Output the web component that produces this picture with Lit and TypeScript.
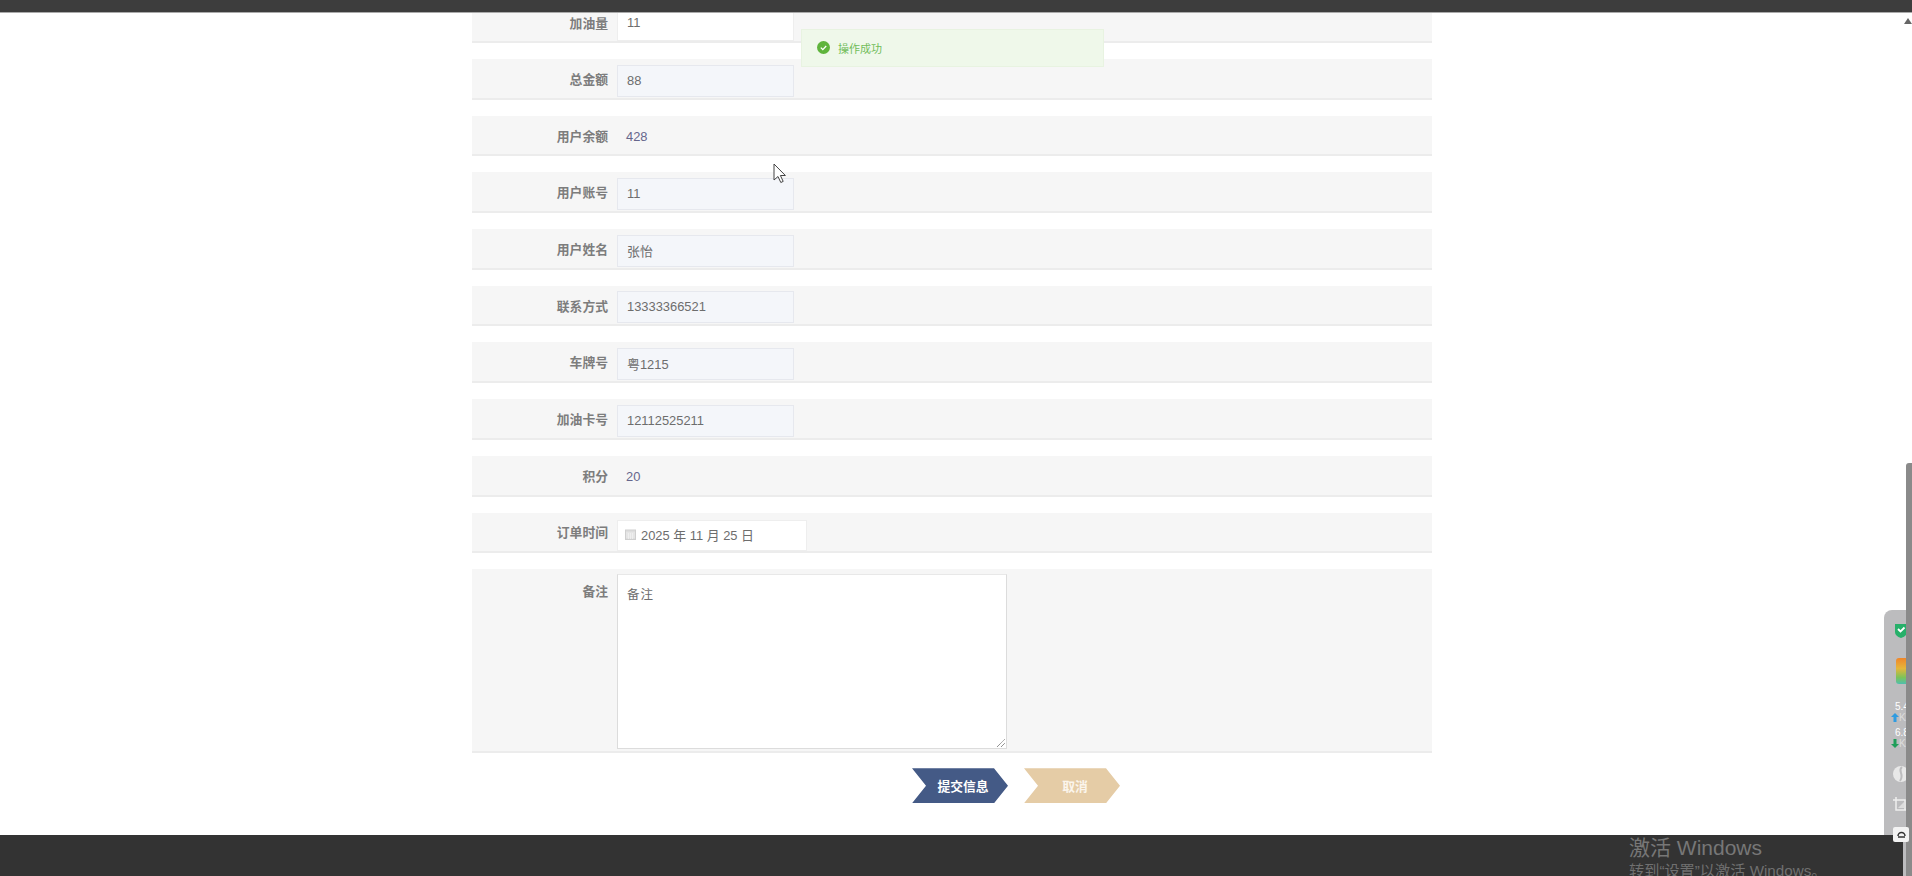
import { LitElement, html, css } from "lit";
import { customElement } from "lit/decorators.js";

type Row = { label: string; value: string; kind: "ro" | "text" };
const rows: Row[] = [
  { label: "总金额", value: "88", kind: "ro" },
  { label: "用户余额", value: "428", kind: "text" },
  { label: "用户账号", value: "11", kind: "ro" },
  { label: "用户姓名", value: "张怡", kind: "ro" },
  { label: "联系方式", value: "13333366521", kind: "ro" },
  { label: "车牌号", value: "粤1215", kind: "ro" },
  { label: "加油卡号", value: "12112525211", kind: "ro" },
  { label: "积分", value: "20", kind: "text" },
];

@customElement("app-root")
export class AppRoot extends LitElement {
  static styles = css`
    :host {
      display: flex;
      flex-direction: column;
      position: relative;
      width: 1912px;
      height: 876px;
      overflow: hidden;
      background: #fff;
      font-family: "Liberation Sans", "Noto Sans CJK SC", sans-serif;
      font-size: 13px;
      color: #666;
    }
    .top { height: 13px; flex: none; background: #3d3d3d; border-bottom: 1px solid #aaa; box-sizing: border-box; }
    main {
      flex: 1;
      min-height: 0;
      width: 960px;
      margin-left: 472px;
      display: flex;
      flex-direction: column;
      gap: 16px;
    }
    .row {
      display: flex;
      align-items: center;
      flex: none;
      height: 40.7px;
      box-sizing: border-box;
      background: #f6f6f6;
      border-bottom: 2px solid #ececec;
    }
    .row.first { height: 30px; align-items: flex-end; overflow: hidden; }
    .row.tall { height: 184px; align-items: flex-start; padding-top: 5px; }
    .label {
      width: 136px;
      flex: none;
      text-align: right;
      font-weight: 700;
      color: #7d7d7d;
      font-size: 12.8px;
      line-height: 15px;
      padding-top: 2px;
    }
    .first .label { align-self: flex-start; margin-top: 1px; }
    .tall .label { padding-top: 10px; }
    .field {
      margin-left: 9px;
      width: 177px;
      height: 32px;
      box-sizing: border-box;
      flex: none;
      align-self: flex-end;
      margin-bottom: 1px;
      display: flex;
      align-items: center;
      padding: 0 9px 1px;
      border: 1px solid #e6e8ee;
      font-size: 12.9px;
      color: #6d6d6d;
      background: #f4f6fa;
    }
    .field.white { background: #fff; border-color: #eee; border-top: 0; height: 28px; margin-bottom: 0; padding-bottom: 8px; }
    .plain { margin-left: 18px; font-size: 12.9px; color: #66668c; padding-top: 3px; }
    .date {
      margin-left: 9px;
      width: 190px;
      height: 31px;
      box-sizing: border-box;
      flex: none;
      align-self: flex-end;
      display: flex;
      align-items: center;
      gap: 5px;
      padding: 0 0 3px 7px;
      background: #fff;
      border: 1px solid #eee;
      font-size: 12.9px;
      color: #6d6d6d;
    }
    .date svg { flex: none; }
    .area {
      margin-left: 9px;
      width: 390px;
      height: 175px;
      box-sizing: border-box;
      flex: none;
      position: relative;
      padding: 9px 9px;
      background: #fff;
      border: 1px solid #dcdcdc;
      border-top-color: #e8e8e8;
      font-size: 12.5px;
      letter-spacing: 1px;
      color: #6d6d6d;
    }
    .grip { position: absolute; right: 0; bottom: 0; }
    .actions {
      display: flex;
      gap: 16px;
      margin-top: -1px;
      padding-left: 440px;
    }
    .btn {
      width: 96px;
      height: 35px;
      flex: none;
      display: flex;
      align-items: center;
      justify-content: center;
      padding-left: 6px;
      box-sizing: border-box;
      color: #fff;
      font-weight: 700;
      font-size: 12.8px;
      clip-path: polygon(0 0, 82px 0, 100% 50%, 82px 100%, 0 100%, 14px 50%);
    }
    .btn.primary { background: #445a86; }
    .btn.cancel { background: #e5cca6; color: #fbf5ec; }
    footer {
      height: 41px;
      flex: none;
      background: #333;
      display: flex;
      justify-content: flex-start;
      padding-left: 1629px;
      overflow: hidden;
      color: #777;
    }
    .activate { line-height: 1; white-space: nowrap; }
    .activate .a { font-size: 21px; color: #777; line-height: 25px; }
    .activate .b { font-size: 15.2px; color: #707070; line-height: 22px; }
    .toast {
      position: absolute;
      left: 801px;
      top: 29px;
      width: 303px;
      height: 38px;
      box-sizing: border-box;
      display: flex;
      align-items: center;
      gap: 8px;
      padding-left: 15px;
      background: #eff8ea;
      border: 1px solid #e8f3e1;
      color: #72bd5a;
      font-size: 11px;
    }
    .toast svg { margin-top: -2px; }
    .cursor { position: absolute; left: 773px; top: 163px; }
    .scroll { position: absolute; right: 0; top: 13px; bottom: 0; width: 8px; background: #fff; }
    .thumb { position: absolute; right: 0; top: 450px; bottom: 0; width: 6px; background: #8a8a8a; border-radius: 3px 0 0 0; }
    .arrow { position: absolute; right: 0; top: 5px; width: 0; height: 0; border: 4px solid transparent; border-top: 0; border-bottom: 6px solid #666; }
    .tray {
      position: absolute;
      left: 1884px;
      top: 610px;
      width: 22px;
      height: 266px;
      box-sizing: border-box;
      background: #bcbcbe;
      border-radius: 8px 0 0 0;
      overflow: hidden;
      color: #fff;
      font-size: 10px;
      line-height: 11px;
    }
    .tray > * { position: absolute; }
    .shield { left: 11px; top: 13px; }
    .meter { left: 12px; top: 48px; width: 10px; height: 26px; border-radius: 3px 0 0 3px; background: linear-gradient(#f0862a, #e6b63a 40%, #7cc35a 75%, #4fbfae); }
    .t1 { left: 11px; top: 91px; }
    .t2 { left: 11px; top: 117px; }
    .k1 { left: 15px; top: 102px; color: #ddd; }
    .k2 { left: 15px; top: 128px; color: #ddd; }
    .dot1 { left: 7px; top: 103px; }
    .dot2 { left: 7px; top: 129px; }
    .spin { left: 9px; top: 156px; }
    .crop { left: 9px; top: 187px; }
    .dark { position: absolute; left: 1884px; top: 835px; width: 19px; height: 41px; background: #333; }
    .cam { position: absolute; left: 1893px; top: 827px; width: 16px; height: 15px; background: #f3f3f3; border-radius: 2px; display: flex; align-items: center; justify-content: center; }
  `;

  private field(r: Row) {
    if (r.kind === "text") return html`<span class="plain">${r.value}</span>`;
    return html`<div class="field">${r.value}</div>`;
  }

  render() {
    return html`
      <div class="top"></div>
      <main>
        <div class="row first">
          <span class="label">加油量</span>
          <div class="field white">11</div>
        </div>
        ${rows.map(
          (r) => html`<div class="row"><span class="label">${r.label}</span>${this.field(r)}</div>`
        )}
        <div class="row">
          <span class="label">订单时间</span>
          <div class="date">
            <svg width="11" height="11" viewBox="0 0 11 11"><rect x="0.5" y="1" width="10" height="9.5" fill="#dedede" stroke="#cfcfcf"/><path d="M1 4h9M1 6h9M1 8h9M3.500 4v6M5.500 4v6M7.500 4v6" stroke="#f4f4f4" stroke-width="0.7"/></svg>
            <span>2025 年 11 月 25 日</span>
          </div>
        </div>
        <div class="row tall">
          <span class="label">备注</span>
          <div class="area">
            备注
            <svg class="grip" width="11" height="11" viewBox="0 0 11 11"><path d="M2 10 10 2M6 10l4-4" stroke="#666" stroke-width="1" stroke-dasharray="1 .6"/></svg>
          </div>
        </div>
        <div class="actions">
          <div class="btn primary">提交信息</div>
          <div class="btn cancel">取消</div>
        </div>
      </main>
      <footer>
        <div class="activate">
          <div class="a">激活 Windows</div>
          <div class="b">转到“设置”以激活 Windows。</div>
        </div>
      </footer>
      <div class="toast">
        <svg width="13" height="13" viewBox="0 0 13 13"><circle cx="6.500" cy="6.500" r="6.500" fill="#5fb43c"/><path d="M3.800 6.600l2 2 3.400-3.600" fill="none" stroke="#fff" stroke-width="1.300"/></svg>
        <span>操作成功</span>
      </div>
      <svg class="cursor" width="14" height="21" viewBox="0 0 14 21"><path d="M1 1v16l4-3.500 2.800 6 2.400-1.100-2.800-5.900h5z" fill="#fff" stroke="#444" stroke-width="1"/></svg>
      <div class="scroll"><div class="thumb"></div><div class="arrow"></div></div>
      <div class="tray">
        <svg class="shield" width="12" height="15" viewBox="0 0 12 15"><path d="M0 1h12v8q0 4-6 6-6-2-6-6z" fill="#27b06a"/><path d="M3 6l2.500 2.500L9.500 4.500" fill="none" stroke="#fff" stroke-width="1.800"/></svg>
        <div class="meter"></div>
        <span class="t1">5.4</span><span class="k1">K/s</span>
        <span class="t2">6.8</span><span class="k2">K/s</span>
        <svg class="dot1" width="8" height="9" viewBox="0 0 8 9"><path d="M4 0l4 4H5.500v5h-3V4H0z" fill="#2f9be0"/></svg>
        <svg class="dot2" width="8" height="9" viewBox="0 0 8 9"><path d="M4 9l4-4H5.500V0h-3v5H0z" fill="#1f9e5a"/></svg>
        <svg class="spin" width="16" height="16" viewBox="0 0 16 16"><circle cx="8" cy="8" r="8" fill="#e8e8e8"/><path d="M9 1C4 5 12 8 7 15" fill="none" stroke="#bcbcbe" stroke-width="2"/></svg>
        <svg class="crop" width="14" height="16" viewBox="0 0 14 16"><path d="M3 0v13h11M0 3h12v10" fill="none" stroke="#eee" stroke-width="1.500"/><path d="M5 11l6-6v6z" fill="#ddd"/></svg>
      </div>
      <div class="dark"></div>
      <div class="cam"><svg width="9" height="8" viewBox="0 0 9 8"><path d="M1 5a3.500 3.500 0 0 1 7 0" fill="none" stroke="#333" stroke-width="1.500"/><path d="M1 6h7" stroke="#333" stroke-width="1.500"/></svg></div>
    `;
  }
}
